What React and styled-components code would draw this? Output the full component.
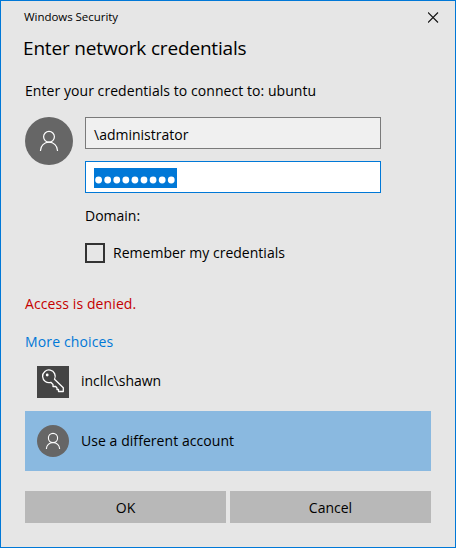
import React from "react";
import styled, { createGlobalStyle } from "styled-components";

const GlobalStyle = createGlobalStyle`
  * { box-sizing: border-box; }
  body { margin: 0; background: #e6e6e6; }
`;

const Dialog = styled.main`
  display: flex;
  flex-direction: column;
  width: 456px;
  height: 548px;
  padding: 0 24px;
  border: 1px solid #0078d7;
  background: #e6e6e6;
  color: #000;
  font-family: "Open Sans", "Noto Sans", sans-serif;
`;

const Text = styled.span`
  display: block;
  font-size: ${(p) => p.$size || 14}px;
  line-height: 20px;
  letter-spacing: ${(p) => p.$track || 0}px;
  white-space: pre;
`;

const TitleBar = styled.header`
  display: flex;
  justify-content: space-between;
  height: 32px;
  margin: 0 -8px 0 -1px;
  padding-top: 6px;
`;

const CloseButton = styled.button`
  display: flex;
  width: 11px;
  height: 11px;
  margin: 5px 0 0 0;
  padding: 0;
  border: 0;
  background: none;
`;

const Heading = styled.h1`
  height: 48px;
  margin: 0 0 0 -2px;
  font-weight: 400;
  ${Text} { line-height: 30px; }
`;

const Credentials = styled.section`
  display: flex;
  gap: 12px;
  height: 177px;
  margin-top: 16px;
`;

const Avatar = styled.div`
  display: flex;
  flex: none;
  width: ${(p) => p.$size}px;
  height: ${(p) => p.$size}px;
  border-radius: 50%;
  background: #666;
`;

const Fields = styled.div`
  display: flex;
  flex-direction: column;
  width: 296px;
`;

const Field = styled.div`
  display: flex;
  align-items: center;
  height: 32px;
  margin-bottom: 12px;
  padding: 3px 8px 0;
  border: 1px solid ${(p) => (p.$active ? "#0078d7" : "#7a7a7a")};
  background: ${(p) => (p.$active ? "#fff" : "#f0f0f0")};
`;

const Selection = styled.div`
  display: flex;
  width: 83px;
  height: 20px;
  margin-top: -1px;
  background: #0078d7;
`;

const DomainText = styled(Text)`
  margin-top: 1px;
`;

const Remember = styled.label`
  display: flex;
  align-items: center;
  gap: 8px;
  height: 20px;
  margin-top: 17px;
`;

const Checkbox = styled.span`
  width: 20px;
  height: 20px;
  border: 2px solid #333;
`;

const ErrorText = styled(Text)`
  color: #c50000;
`;

const LinkText = styled(Text)`
  margin-top: 18px;
  color: #0078d7;
`;

const Account = styled.div`
  display: flex;
  align-items: center;
  gap: 12px;
  height: 60px;
  padding-left: 12px;
  background: ${(p) => (p.$selected ? "#8ab9e0" : "transparent")};
`;

const Accounts = styled.div`
  width: 406px;
  margin-top: -1px;
`;

const KeyTile = styled.div`
  display: flex;
  width: 32px;
  height: 32px;
  margin-top: 2px;
  background: #444;
`;

const Actions = styled.footer`
  display: grid;
  grid-template-columns: 201px 201px;
  gap: 4px;
  margin-top: 20px;
`;

const ActionButton = styled.button`
  display: flex;
  align-items: center;
  justify-content: center;
  height: 32px;
  padding: 2px 0 0;
  border: 0;
  background: #b8b8b8;
  color: #000;
  font-family: inherit;
`;

const Person = ({ size }) => (
  <Avatar $size={size}>
    {size === 48 ? (
      <svg width="48" height="48" fill="none" stroke="#fff" strokeWidth="1.2">
        <circle cx="24" cy="19.8" r="5.4" />
        <path d="M15.5 34v-.5a8.5 8.3 0 0 1 17 0v.5" />
      </svg>
    ) : (
      <svg width="32" height="32" fill="none" stroke="#fff" strokeWidth="1.1">
        <circle cx="16" cy="13" r="4.6" />
        <path d="M9.4 24v-.2a6.6 6.3 0 0 1 13.2 0v.2" />
      </svg>
    )}
  </Avatar>
);

export default function App() {
  return (
    <>
      <GlobalStyle />
      <Dialog>
        <TitleBar>
          <Text $size={11.5} $track={-0.04}>Windows Security</Text>
          <CloseButton aria-label="Close">
            <svg width="11" height="11" stroke="#111" strokeWidth="1.1">
              <path d="M0 .5 10 10.5M10 .5 0 10.5" />
            </svg>
          </CloseButton>
        </TitleBar>
        <Heading><Text $size={19} $track={-0.17}>Enter network credentials</Text></Heading>
        <Text $track={0.06}>Enter your credentials to connect to: ubuntu</Text>
        <Credentials>
          <Person size={48} />
          <Fields>
            <Field><Text>\administrator</Text></Field>
            <Field $active>
              <Selection>
                <svg width="83" height="20" fill="#fff">
                  {Array.from({ length: 9 }, (_, i) => (
                    <circle key={i} cx={4.6 + i * 9.08} cy="12" r="3.4" />
                  ))}
                </svg>
              </Selection>
            </Field>
            <DomainText>Domain:</DomainText>
            <Remember>
              <Checkbox />
              <Text $track={0.02}>Remember my credentials</Text>
            </Remember>
          </Fields>
        </Credentials>
        <ErrorText $track={0.1}>Access is denied.</ErrorText>
        <LinkText $track={0.13}>More choices</LinkText>
        <Accounts>
          <Account>
            <KeyTile>
              <svg width="32" height="32" fill="none" stroke="#fff" strokeWidth="1.3" strokeLinejoin="round">
                <path d="M17.5 13.2A6.3 6.3 0 1 0 13.8 16.3L16 18.5V20.5H18.7L20 22V23.5H21.5V25.5H26.3V21.8Z" />
                <circle cx="10.2" cy="9" r="1.4" fill="#fff" stroke="none" />
              </svg>
            </KeyTile>
            <Text>incllc\shawn</Text>
          </Account>
          <Account $selected>
            <Person size={32} />
            <Text $track={0.06}>Use a different account</Text>
          </Account>
        </Accounts>
        <Actions>
          <ActionButton><Text>OK</Text></ActionButton>
          <ActionButton><Text>Cancel</Text></ActionButton>
        </Actions>
      </Dialog>
    </>
  );
}
